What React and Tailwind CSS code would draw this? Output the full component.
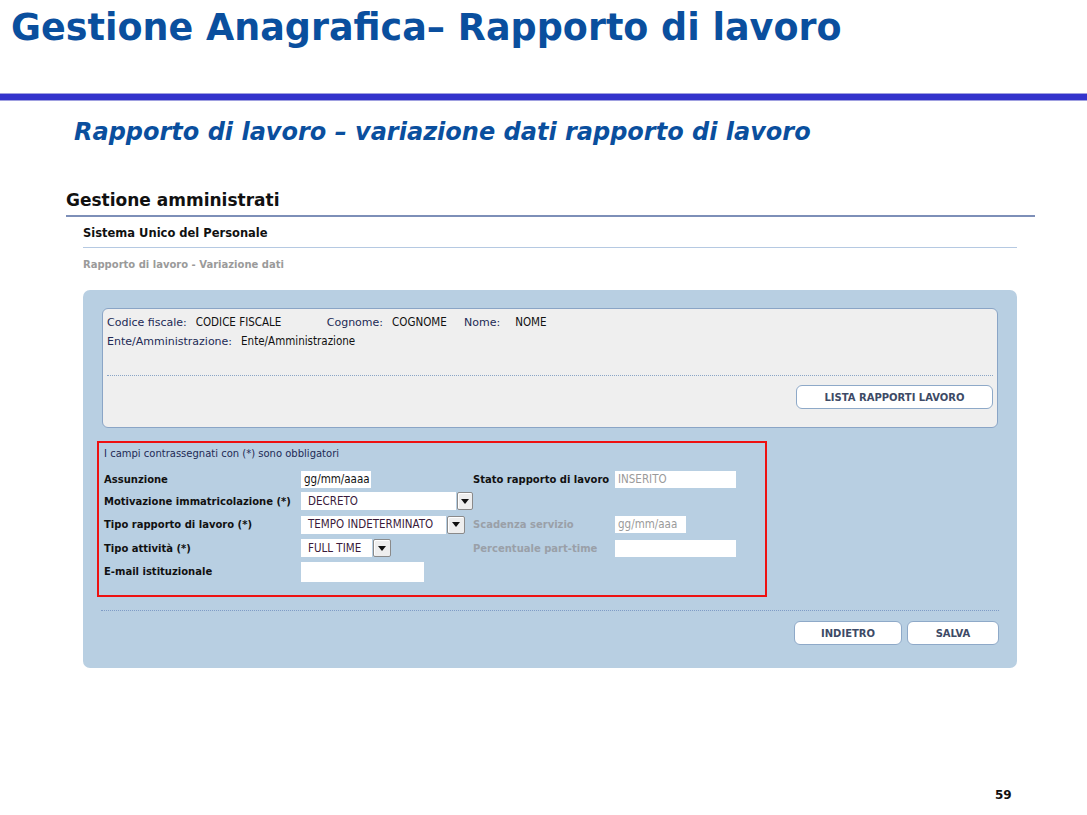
import React from 'react'

const verdana = { fontFamily: '"DejaVu Sans", Verdana, sans-serif' }
const tahoma = { fontFamily: '"DejaVu Sans Condensed", Tahoma, sans-serif' }

function DropBtn() {
  return (
    <span className="ml-[1px] flex h-[18px] w-[18px] items-center justify-center rounded-[2px] border border-[#8a8a8a] bg-[#eeeeee] shadow-[inset_1px_1px_0_#fff]">
      <svg width="8" height="5" viewBox="0 0 8 5">
        <path d="M0 0h8L4 5z" fill="#111" />
      </svg>
    </span>
  )
}

function Select({ value, width }) {
  return (
    <div className="flex items-center">
      <div
        className={`flex h-[18px] items-center bg-white pl-[7px] text-[11.5px] text-[#3a1a3a] ${width}`}
        style={tahoma}
      >
        {value}
      </div>
      <DropBtn />
    </div>
  )
}

function Input({ value, width, muted }) {
  return (
    <div
      className={`flex h-[17px] items-center bg-white pl-[3px] text-[11.5px] ${muted ? 'text-[#9a9a9a]' : 'text-[#111]'} ${width}`}
      style={tahoma}
    >
      {value}
    </div>
  )
}

function Button({ label, width }) {
  return (
    <div
      className={`flex h-[24px] items-center justify-center rounded-[6px] border border-[#8ea9c8] bg-white text-[10px] font-bold text-[#3d4a66] ${width}`}
      style={verdana}
    >
      {label}
    </div>
  )
}

function Row({ label, field, label2, field2, muted2, height = 'h-[23.5px]' }) {
  return (
    <div className={`flex items-center ${height}`}>
      <div className="w-[197px] text-[10px] font-bold text-[#111]" style={verdana}>
        {label}
      </div>
      <div className="w-[172px]">{field}</div>
      <div
        className={`w-[142px] text-[10px] font-bold ${muted2 ? 'text-[#9aa0a8]' : 'text-[#111]'}`}
        style={verdana}
      >
        {label2}
      </div>
      <div>{field2}</div>
    </div>
  )
}

export default function App() {
  return (
    <div className="relative flex h-[815px] w-[1087px] flex-col overflow-hidden bg-white">
      {/* Slide title */}
      <div className="h-[93px] pl-[11px] pt-[6px]">
        <h1 className="text-[36.5px] font-bold leading-[44px] text-[#0a4f9e]" style={verdana}>
          Gestione Anagrafica– Rapporto di lavoro
        </h1>
      </div>
      <div className="h-[8px] border-y border-[#a0a0e0] bg-[#3434cc]" />

      <div className="pl-[74px] pt-[17px]">
        <h2 className="text-[24px] font-bold italic leading-[28px] text-[#0a4f9e]" style={verdana}>
          Rapporto di lavoro – variazione dati rapporto di lavoro
        </h2>
      </div>

      {/* Screenshot of the application */}
      <div className="ml-[66px] mr-[52px] mt-[44px]">
        <div className="border-b-2 border-[#7d8fb8] pb-[5px] text-[17px] font-bold leading-[20px] text-[#111]" style={verdana}>
          Gestione amministrati
        </div>

        <div className="ml-[17px] mr-[18px]">
          <div
            className="border-b border-[#b5c9e2] pb-[6px] pt-[9px] text-[11.5px] font-bold leading-[15px] text-[#111]"
            style={verdana}
          >
            Sistema Unico del Personale
          </div>
          <div className="pt-[10px] text-[10px] font-bold leading-[13px] text-[#9a9a9a]" style={verdana}>
            Rapporto di lavoro - Variazione dati
          </div>

          <div className="mt-[19px] h-[378px] rounded-[7px] bg-[#b8cfe2] pt-[18px]">
            {/* Anagrafica box */}
            <div className="mx-[19px] h-[120px] rounded-[6px] border border-[#8aa5c6] bg-[#efefef] px-[4px] pt-[4px]">
              <div className="flex items-center text-[11px] leading-[19px]">
                <span className="text-[#222a55]" style={verdana}>Codice fiscale:</span>
                <span className="ml-[9px] w-[131px] text-[11.5px] text-[#111]" style={tahoma}>CODICE FISCALE</span>
                <span className="text-[#222a55]" style={verdana}>Cognome:</span>
                <span className="ml-[9px] w-[72px] text-[11.5px] text-[#111]" style={tahoma}>COGNOME</span>
                <span className="text-[#222a55]" style={verdana}>Nome:</span>
                <span className="ml-[15px] text-[11.5px] text-[#111]" style={tahoma}>NOME</span>
              </div>
              <div className="flex items-center text-[11px] leading-[19px]">
                <span className="text-[#222a55]" style={verdana}>Ente/Amministrazione:</span>
                <span className="ml-[9px] text-[11.5px] text-[#111]" style={tahoma}>Ente/Amministrazione</span>
              </div>
              <div className="mt-[24px] border-t border-dotted border-[#8aa5c6]" />
              <div className="flex justify-end pt-[9px]">
                <Button label="LISTA RAPPORTI LAVORO" width="w-[197px]" />
              </div>
            </div>

            {/* Dati rapporto di lavoro */}
            <div className="ml-[14px] mt-[13px] h-[156px] w-[670px] border-2 border-[#ee1111] px-[5px] pt-[4px]">
              <div className="text-[10px] leading-[14px] text-[#222a55]" style={verdana}>
                I campi contrassegnati con (*) sono obbligatori
              </div>
              <div className="pt-[8px]">
                <Row
                  height="h-[20.5px]"
                  label="Assunzione"
                  field={<Input value="gg/mm/aaaa" width="w-[70px]" />}
                  label2="Stato rapporto di lavoro"
                  field2={<Input value="INSERITO" width="w-[121px]" muted />}
                />
                <Row
                  label="Motivazione immatricolazione (*)"
                  field={<Select value="DECRETO" width="w-[173px]" />}
                />
                <Row
                  label="Tipo rapporto di lavoro (*)"
                  field={<Select value="TEMPO INDETERMINATO" width="w-[145px]" />}
                  label2="Scadenza servizio"
                  muted2
                  field2={<Input value="gg/mm/aaa" width="w-[71px]" muted />}
                />
                <Row
                  label="Tipo attività (*)"
                  field={<Select value="FULL TIME" width="w-[71px]" />}
                  label2="Percentuale part-time"
                  muted2
                  field2={<Input value="" width="w-[121px]" />}
                />
                <div className="flex h-[23.5px] items-center">
                  <div className="w-[197px] text-[10px] font-bold text-[#111]" style={verdana}>
                    E-mail istituzionale
                  </div>
                  <div className="h-[20px] w-[123px] bg-white" />
                </div>
              </div>
            </div>

            <div className="mx-[18px] mt-[13px] border-t border-dotted border-[#7f9cc6]" />
            <div className="mr-[18px] mt-[10px] flex justify-end gap-[5px]">
              <Button label="INDIETRO" width="w-[108px]" />
              <Button label="SALVA" width="w-[92px]" />
            </div>
          </div>
        </div>
      </div>

      <div className="absolute left-[995px] top-[786px] text-[12px] font-bold text-[#111]" style={verdana}>
        59
      </div>
    </div>
  )
}
